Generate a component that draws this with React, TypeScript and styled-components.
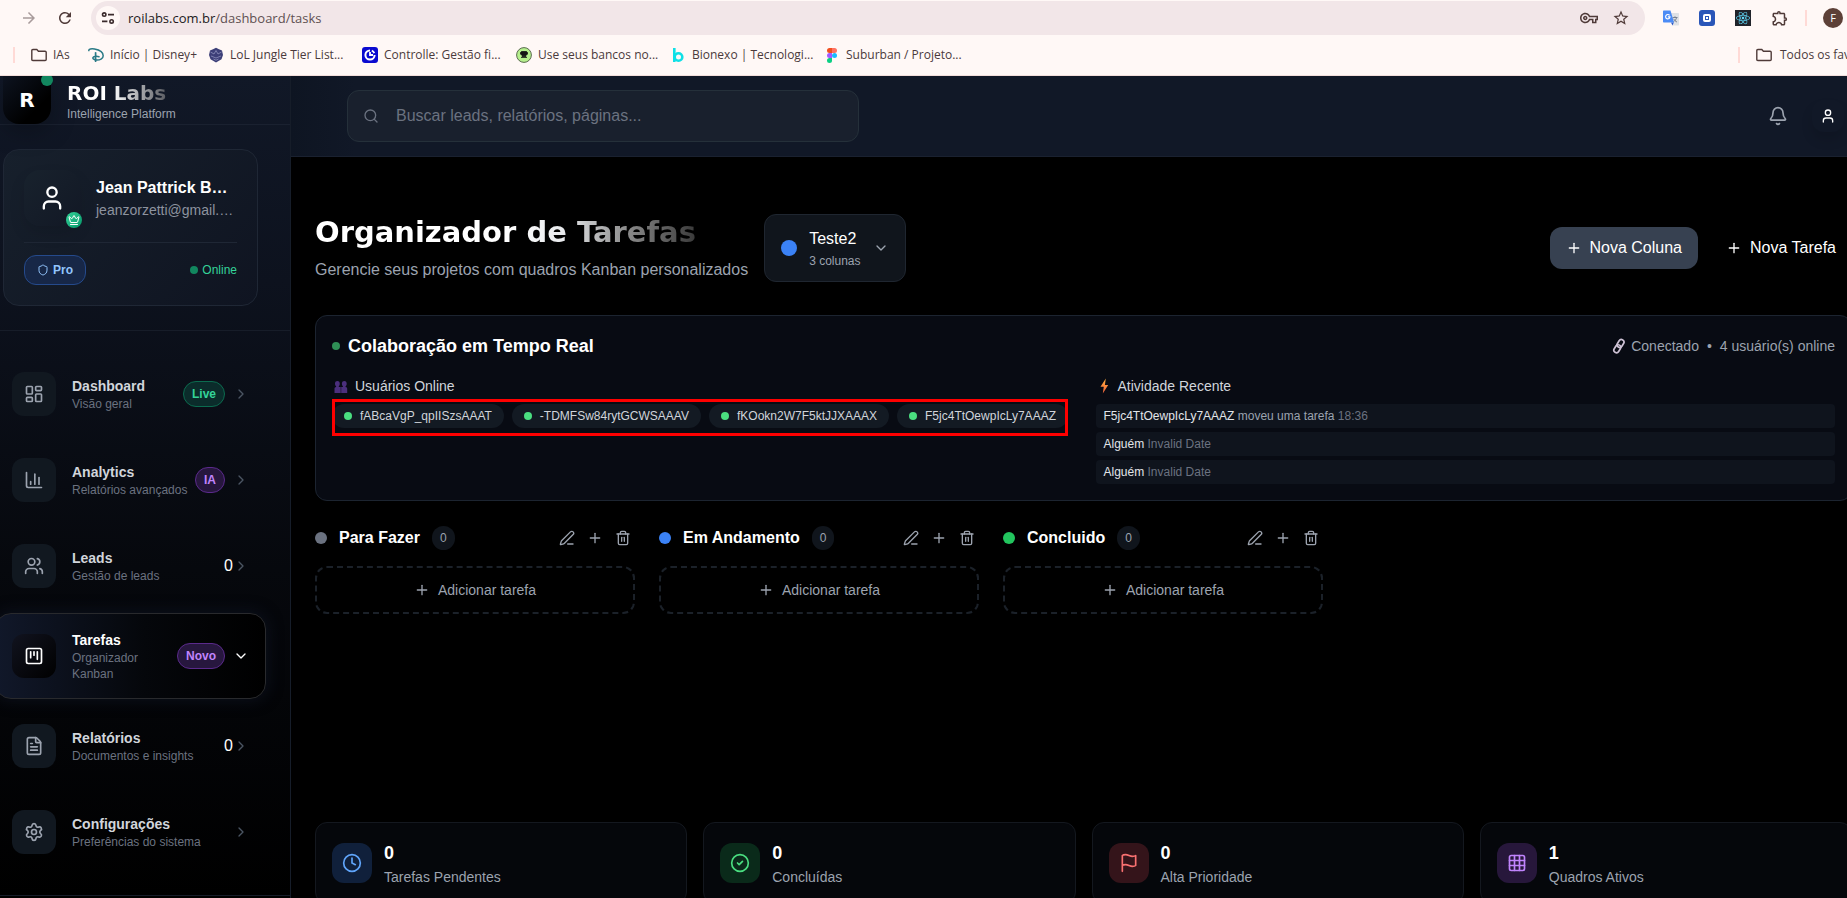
import React from "react";
import styled, { createGlobalStyle, css } from "styled-components";
import {
  Bell, ChartColumn, ChevronDown, ChevronRight, CircleCheck, Clock, Crown, FileText, Grid3x3,
  LayoutDashboard, PenLine, Plus, Search, Settings, Shield, SquareKanban, Trash2, User, Users,
} from "lucide-react";
import {
  MdArrowForward, MdOutlineExtension, MdOutlineVpnKey, MdRefresh, MdStarBorder,
} from "react-icons/md";
import { FaReact } from "react-icons/fa6";

const Global = createGlobalStyle`
  * { box-sizing: border-box; }
  body { margin: 0; background: #000; color: #fff; font: 16px/24px "Liberation Sans", Arial, sans-serif; }
  button { font: inherit; color: inherit; border: 0; padding: 0; background: none; cursor: pointer; }
  a { color: inherit; text-decoration: none; }
  h1, h2, h3, p, ul { margin: 0; padding: 0; }
  ul { list-style: none; }
  svg { flex: none; display: block; }
`;

const Window = styled.div`
  height: 100vh;
  display: flex;
  flex-direction: column;
  overflow: hidden;
`;

/* Browser bars */
const Chrome = styled.header`
  flex: none;
  background: #fff8f6;
  border-bottom: 1px solid #f3dedb;
  color: #4a3a3c;
  font: 12px/16px "Open Sans", "Noto Sans", sans-serif;
  overflow: hidden;
`;
const Toolbar = styled.div`
  display: flex;
  align-items: center;
  padding: 1px 4px 0 20px;
`;
const ToolButton = styled.button<{ $faint?: boolean; $gap?: number }>`
  display: flex;
  flex: none;
  margin-right: ${(p) => p.$gap ?? 0}px;
  color: ${(p) => (p.$faint ? "#a89b9b" : "#4f3a38")};
`;
const Omnibox = styled.div`
  flex: 1;
  display: flex;
  align-items: center;
  height: 34px;
  padding: 0 15px 0 5px;
  border-radius: 17px;
  background: #f2e6e8;
`;
const SiteInfo = styled.button`
  display: grid;
  place-items: center;
  width: 24px;
  height: 24px;
  border-radius: 12px;
  background: #fff8f6;
`;
const Url = styled.span`
  flex: 1;
  padding-left: 8px;
  font-size: 13px;
  color: #5f5052;
  b { font-weight: 400; color: #221a1b; }
`;
const Extensions = styled.div<{ $gap: number }>`
  display: flex;
  align-items: center;
  gap: ${(p) => p.$gap}px;
  padding-left: ${(p) => (p.$gap === 20 ? 18 : 16)}px;
`;
const Divider = styled.span`
  flex: none;
  width: 2px;
  height: 16px;
  background: #ffdad6;
`;
const ProfileDot = styled.button`
  width: 20px;
  height: 20px;
  border-radius: 10px;
  background: #5d4037;
  color: #fff;
  font-size: 11px;
  line-height: 20px;
`;
const Bookmarks = styled.nav`
  display: flex;
  align-items: center;
  height: 40px;
  padding-left: 13px;
`;
const Bookmark = styled.a<{ $width: number }>`
  display: flex;
  align-items: center;
  gap: 6px;
  flex: none;
  width: ${(p) => p.$width}px;
  white-space: nowrap;
`;
const BookmarkList = styled.div`
  flex: 1;
  display: flex;
  padding-left: 16px;
`;
const AllBookmarks = styled.a`
  display: flex;
  align-items: center;
  gap: 8px;
  flex: none;
  width: 91px;
  margin-left: 16px;
  overflow: hidden;
  white-space: nowrap;
`;

/* Application shell */
const Shell = styled.div`
  flex: 1;
  min-height: 0;
  display: flex;
  overflow: hidden;
`;
const Sidebar = styled.aside`
  flex: none;
  width: 291px;
  overflow: hidden;
  border-right: 1px solid #161d29;
  background: linear-gradient(180deg, #111827 0%, #0d121e 25%, #06080d 60%, #000 100%);
`;
const Brand = styled.div`
  display: flex;
  gap: 16px;
  height: 49px;
  padding-left: 3px;
  border-bottom: 1px solid #1a2130;
`;
const Logo = styled.div`
  position: relative;
  width: 48px;
  height: 48px;
  border-radius: 0 0 16px 16px;
  background: linear-gradient(135deg, #0d1320, #000 70%);
  font: 900 20px/48px "DejaVu Sans", "Liberation Sans", sans-serif;
  text-align: center;
  box-shadow: 0 8px 24px rgba(0, 0, 0, 0.25);
`;
const LogoDot = styled.span`
  position: absolute;
  top: -2px;
  right: -2px;
  width: 12px;
  height: 12px;
  border-radius: 6px;
  background: #12875f;
`;
const blackFace = css`
  font-family: "DejaVu Sans", "Liberation Sans", sans-serif;
  font-weight: 900;
  color: transparent;
  background-clip: text;
  -webkit-background-clip: text;
`;
const BrandName = styled.div`
  ${blackFace}
  width: max-content;
  padding-top: 4px;
  font-size: 20px;
  line-height: 26px;
  background-image: linear-gradient(90deg, #fff 45%, #4b4d54 105%);
`;
const BrandNote = styled.div`
  font-size: 12px;
  line-height: 16px;
  color: #9ca3af;
`;
const UserCard = styled.section`
  margin: 24px 32px 24px 3px;
  padding: 20px;
  border: 1px solid #1f2735;
  border-radius: 16px;
  background: linear-gradient(135deg, #17202c, #0f1421);
`;
const UserTop = styled.div`
  display: flex;
  align-items: center;
  gap: 16px;
  padding-bottom: 16px;
  border-bottom: 1px solid #1f2735;
`;
const Avatar = styled.div`
  position: relative;
  display: grid;
  place-items: center;
  width: 56px;
  height: 56px;
  border-radius: 16px;
  background: linear-gradient(135deg, #18222d, #121825);
  box-shadow: 0 8px 16px rgba(0, 0, 0, 0.1);
`;
const CrownBadge = styled.span`
  position: absolute;
  right: -2px;
  bottom: -2px;
  display: grid;
  place-items: center;
  width: 16px;
  height: 16px;
  border-radius: 8px;
  background: linear-gradient(135deg, #34d399, #059669);
`;
const UserName = styled.div`
  font-weight: 700;
  white-space: nowrap;
`;
const UserMail = styled.div`
  font-size: 14px;
  line-height: 20px;
  color: #8d939f;
`;
const UserBottom = styled.div`
  display: flex;
  align-items: center;
  justify-content: space-between;
  padding-top: 12px;
`;
const Plan = styled.span`
  display: flex;
  align-items: center;
  gap: 4px;
  height: 30px;
  padding: 0 12px;
  border: 1px solid #254a8c;
  border-radius: 12px;
  background: #172747;
  color: #93c5fd;
  font-size: 12px;
  font-weight: 700;
`;
const Online = styled.span`
  display: flex;
  align-items: center;
  gap: 4px;
  font-size: 12px;
  color: #34d399;
`;
const Dot = styled.span<{ $size: number; $color: string }>`
  flex: none;
  width: ${(p) => p.$size}px;
  height: ${(p) => p.$size}px;
  border-radius: 50%;
  background: ${(p) => p.$color};
`;
const Nav = styled.nav`
  display: flex;
  flex-direction: column;
  gap: 8px;
  padding: 24px 24px 24px 0;
  border: solid #171d29;
  border-width: 1px 0;
`;
const NavItem = styled.a<{ $active?: boolean }>`
  display: flex;
  align-items: center;
  margin-left: -5px;
  padding: 16px;
  border: 1px solid transparent;
  border-radius: 16px;
  ${(p) =>
    p.$active &&
    css`
      border-color: #292a2d;
      background: linear-gradient(90deg, #11182a, #05070b 55%, #000);
      box-shadow: 0 0 16px rgba(17, 24, 42, 0.7);
    `}
`;
const NavIcon = styled.span<{ $active?: boolean }>`
  flex: none;
  display: grid;
  place-items: center;
  width: 44px;
  height: 44px;
  margin-right: 16px;
  border-radius: 12px;
  color: ${(p) => (p.$active ? "#fff" : "#9ca3af")};
  background: ${(p) => (p.$active ? "linear-gradient(135deg, #11131f, #000)" : "#111820")};
`;
const NavText = styled.span`
  flex: 1;
  min-width: 0;
  padding-right: 4px;
`;
const NavTitle = styled.span<{ $active?: boolean }>`
  display: block;
  font-size: 14px;
  line-height: 20px;
  font-weight: 700;
  color: ${(p) => (p.$active ? "#fff" : "#d1d5db")};
`;
const NavNote = styled.span`
  display: block;
  font-size: 12px;
  line-height: 16px;
  color: #6b7280;
`;
const NavBadge = styled.span<{ $tone: "green" | "purple" }>`
  flex: none;
  margin-right: 8px;
  padding: 4px 8px;
  border: 1px solid ${(p) => (p.$tone === "green" ? "#0b6b4f" : "#5b2a8c")};
  border-radius: 13px;
  background: ${(p) => (p.$tone === "green" ? "#0b2c2b" : "#27173e")};
  color: ${(p) => (p.$tone === "green" ? "#34d399" : "#c084fc")};
  font-size: 12px;
  line-height: 16px;
  font-weight: 700;
`;

/* Main area */
const Main = styled.div`
  flex: 1;
  min-width: 0;
  overflow: hidden;
`;
const TopBar = styled.div`
  display: flex;
  align-items: center;
  height: 81px;
  padding: 0 3px 0 56px;
  border-bottom: 1px solid #1a2130;
  background: linear-gradient(90deg, #0e1522, #111827 64px);
`;
const SearchBox = styled.label`
  display: flex;
  align-items: center;
  gap: 17px;
  width: 512px;
  height: 52px;
  padding: 0 15px;
  border: 1px solid #25303a;
  border-radius: 12px;
  background: #19202d;
  color: #6b7280;
`;
const SearchInput = styled.input`
  flex: 1;
  border: 0;
  outline: 0;
  padding: 0;
  background: none;
  color: #fff;
  font: inherit;
  &::placeholder { color: #6b7280; opacity: 1; }
`;
const BellButton = styled.button`
  margin-left: auto;
  margin-right: 24px;
  color: #9ca3af;
`;
const AccountButton = styled.button`
  display: grid;
  place-items: center;
  width: 32px;
  height: 32px;
  border-radius: 12px;
  box-shadow: 0 8px 12px rgba(0, 0, 0, 0.12);
`;
const Content = styled.main`
  margin-right: -5px;
  padding: 57px 0 24px 24px;
`;
const PageHead = styled.div`
  display: flex;
  align-items: center;
  gap: 16px;
  margin-bottom: 33px;
`;
const PageTitle = styled.h1`
  ${blackFace}
  width: max-content;
  margin-bottom: 8px;
  font-size: 29px;
  line-height: 36px;
  background-image: linear-gradient(90deg, #fff 50%, #e8eaed 65%, #8a8a8a 82%, #3a3a3a 100%);
`;
const PageNote = styled.p`
  color: #9ca3af;
`;
const BoardPicker = styled.button`
  display: flex;
  align-items: center;
  gap: 12px;
  padding: 12px 16px;
  border: 1px solid #1f2630;
  border-radius: 12px;
  background: #10151c;
  text-align: left;
`;
const PickerText = styled.span`
  display: flex;
  flex-direction: column;
  gap: 2px;
  small { font-size: 12px; line-height: 16px; color: #9ca3af; }
`;
const Actions = styled.div`
  display: flex;
  gap: 12px;
  margin-left: auto;
`;
const ActionButton = styled.button<{ $filled?: boolean }>`
  display: flex;
  align-items: center;
  gap: 8px;
  height: 42px;
  padding: 0 16px;
  border-radius: 12px;
  background: ${(p) => (p.$filled ? "#374151" : "none")};
`;
const Panel = styled.section`
  padding: 16px;
  border: 1px solid #1c2430;
  border-radius: 12px;
  background: #080b13;
`;
const PanelHead = styled.div`
  display: flex;
  align-items: center;
  gap: 8px;
  margin-bottom: 16px;
`;
const PanelTitle = styled.h2`
  font-size: 18px;
  line-height: 28px;
  font-weight: 700;
`;
const Connection = styled.div`
  display: flex;
  align-items: center;
  gap: 8px;
  margin-left: auto;
  font-size: 14px;
  line-height: 20px;
  color: #9ca3af;
`;
const LinkState = styled.span`
  display: flex;
  align-items: center;
  gap: 5px;
`;
const PanelGrid = styled.div`
  display: grid;
  grid-template-columns: 1fr 1fr;
  gap: 24px;
`;
const GroupTitle = styled.h3`
  display: flex;
  align-items: center;
  gap: 5px;
  margin-bottom: 8px;
  font-size: 14px;
  line-height: 20px;
  font-weight: 400;
  color: #d1d5db;
`;
const ChipList = styled.ul`
  position: relative;
  display: flex;
  gap: 8px;
  width: max-content;
`;
const Marker = styled.span`
  position: absolute;
  inset: -5px 0 -8px 0;
  border: 3px solid #f00;
`;
const Chip = styled.li`
  display: flex;
  align-items: center;
  gap: 8px;
  height: 24px;
  padding: 0 12px;
  border-radius: 12px;
  background: #131a23;
  color: #d1d5db;
  font-size: 12px;
`;
const FeedList = styled.ul`
  display: flex;
  flex-direction: column;
  gap: 4px;
`;
const FeedRow = styled.li`
  padding: 4px 8px;
  border-radius: 4px;
  background: #0f141d;
  color: #9ca3af;
  font-size: 12px;
  line-height: 16px;
  b { font-weight: 400; color: #e2e5ea; }
  time { color: #6b7280; }
`;
const Board = styled.section`
  display: flex;
  gap: 24px;
  min-height: 272px;
  margin: 25px 0 24px;
`;
const Column = styled.div`
  width: 320px;
`;
const ColumnHead = styled.div`
  display: flex;
  align-items: center;
  gap: 12px;
  margin-bottom: 16px;
  h3 { font-size: 16px; line-height: 24px; font-weight: 700; }
`;
const Count = styled.span`
  padding: 4px 8px;
  border-radius: 12px;
  background: #10151c;
  color: #9ca3af;
  font-size: 12px;
  line-height: 16px;
`;
const ColumnTools = styled.div`
  display: flex;
  gap: 4px;
  margin-left: auto;
  color: #9ca3af;
  button { padding: 4px; }
`;
const AddTask = styled.button`
  display: flex;
  align-items: center;
  justify-content: center;
  gap: 8px;
  width: 100%;
  height: 48px;
  border: 2px dashed #1b2129;
  border-radius: 12px;
  color: #9ca3af;
  font-size: 14px;
`;
const Stats = styled.section`
  display: grid;
  grid-template-columns: repeat(4, 1fr);
  gap: 16px;
`;
const StatCard = styled.div`
  display: flex;
  align-items: center;
  gap: 12px;
  padding: 16px;
  border: 1px solid #14181f;
  border-radius: 12px;
  background: #05070b;
`;
const StatIcon = styled.span<{ $bg: string; $fg: string }>`
  display: grid;
  place-items: center;
  width: 40px;
  height: 40px;
  border-radius: 12px;
  background: ${(p) => p.$bg};
  color: ${(p) => p.$fg};
`;
const StatValue = styled.div`
  font-size: 18px;
  line-height: 28px;
  font-weight: 700;
`;
const StatLabel = styled.div`
  font-size: 14px;
  line-height: 20px;
  color: #9ca3af;
`;

/* Drawings */
const FolderIcon = () => (
  <svg width="16" height="16" viewBox="0 0 16 16" fill="none" stroke="#4f3a38" strokeWidth="1.4">
    <path d="M.8 3.600c0-.7.4-1.100 1.100-1.100h3.900l1.600 1.700h6.700c.7 0 1.100.4 1.100 1.100v7.100c0 .7-.4 1.100-1.100 1.100H1.900c-.7 0-1.100-.4-1.100-1.100z" />
  </svg>
);
const TuneIcon = () => (
  <svg width="14" height="14" viewBox="0 0 14 14" fill="none" stroke="#3b2b2c" strokeWidth="1.6">
    <circle cx="3.2" cy="3.6" r="1.7" /><path d="M7 3.6h6M1 10.4h5.4" /><circle cx="10.6" cy="10.4" r="1.7" />
  </svg>
);
const DisneyIcon = () => (
  <svg width="16" height="16" viewBox="0 0 16 16" fill="none" stroke="#2a7a86" strokeLinecap="round">
    <path d="M.8 3.600C.600 1.900 3.500 1.500 6.500 2c4.800.8 8.700 3.300 8.700 6.800 0 3-3.400 4.500-6.700 4.300-2.500-.2-3.900-1.300-3.600-2.400.4-1.300 3.500-1.700 6.100-1" strokeWidth="1.500" />
    <path d="M7.600 5.800v8.400" strokeWidth="1.700" />
  </svg>
);
const LolIcon = () => (
  <svg width="16" height="16" viewBox="0 0 16 16">
    <path d="M8 .8l3 1.400 3 1.300 1 4.500-1.500 4.300L8 15.500l-5.500-3.200L1 8l1-4.500 3-1.300z" fill="#3d3f78" />
    <path d="M2.500 5l3.500 2 2-3.500L10 7l3.500-2M3 9l5 2 5-2M5.500 12l2.500 1.200 2.500-1.200" stroke="#8d8fbb" strokeWidth=".8" fill="none" />
  </svg>
);
const ControlleIcon = () => (
  <svg width="16" height="16" viewBox="0 0 16 16">
    <rect width="16" height="16" rx="3" fill="#0a0ad0" />
    <path d="M8 3.400A4.600 4.600 0 1 0 12.600 8" fill="none" stroke="#fff" strokeWidth="2" />
    <path d="M8 8.900V5M7.100 8H11" stroke="#fff" strokeWidth="1.800" />
    <path d="M9.800 3.700a4.600 4.600 0 0 1 2.500 2.500" fill="none" stroke="#fff" strokeWidth="1.800" />
  </svg>
);
const BankIcon = () => (
  <svg width="16" height="16" viewBox="0 0 16 16">
    <circle cx="8" cy="8" r="7.400" fill="#b6f08d" stroke="#5b6b50" />
    <path d="M5.500 4.500h5l1 1v1.500l-1 1h-5l-1-1V5.500zM6 8.500h4v1H6zM5 10.500h6" fill="#151515" stroke="#151515" strokeWidth=".8" />
  </svg>
);
const BionexoIcon = () => (
  <svg width="16" height="16" viewBox="0 0 16 16" fill="none" stroke="#0fe0e6" strokeWidth="2.600">
    <path d="M4.300 1v14" /><circle cx="8.500" cy="10" r="3.800" />
  </svg>
);
const FigmaIcon = () => (
  <svg width="16" height="16" viewBox="0 0 16 16">
    <path d="M8 1H5.500a2.500 2.500 0 0 0 0 5H8z" fill="#f24e1e" />
    <path d="M8 1h2.500a2.500 2.500 0 0 1 0 5H8z" fill="#ff7262" />
    <path d="M8 6H5.500a2.500 2.500 0 0 0 0 5H8z" fill="#a259ff" />
    <circle cx="10.500" cy="8.500" r="2.500" fill="#1abcfe" />
    <path d="M8 11H5.500A2.500 2.500 0 1 0 8 13.500z" fill="#0acf83" />
  </svg>
);
const CaptureIcon = () => (
  <svg width="16" height="16" viewBox="0 0 16 16">
    <rect width="16" height="16" rx="3" fill="#2a56b8" />
    <rect x="5" y="5" width="6" height="6" rx="1" fill="none" stroke="#fff" strokeWidth="2" />
    <rect x="7" y="7" width="2" height="2" fill="#fff" />
  </svg>
);
const TranslateIcon = () => (
  <svg width="16" height="16" viewBox="0 0 16 16" fill="none">
    <path d="M6.500 3H15c.6 0 1 .4 1 1v10.500c0 .6-.4 1-1 1H9.500z" fill="#dfe1e5" />
    <path d="M9.500 7.500h5M12 6.300v1.200M13.600 7.600c-.5 2-1.700 3.400-3.300 4.300M10.600 8.800c.7 1.500 1.900 2.600 3.400 3.300" stroke="#6f7b8a" strokeWidth=".9" />
    <path d="M8 12.500h2.800L9.500 15.500z" fill="#2a56c6" />
    <path d="M1 .5h6.500l3.500 12H1c-.6 0-1-.4-1-1v-10c0-.6.4-1 1-1z" fill="#4c8bf5" />
    <path d="M6.600 5.400A2.200 2.200 0 1 0 7 6.900H4.900" stroke="#fff" strokeWidth="1.100" />
  </svg>
);
const ReactTile = styled.span`
  display: grid;
  place-items: center;
  width: 16px;
  height: 16px;
  background: #20232a;
  color: #61dafb;
`;
const PeopleIcon = () => (
  <svg width="18" height="16" viewBox="0 0 18 16" fill="#4b2f7d">
    <path d="M3 5.500C3 3.800 4.100 3 5.400 3s2.400.8 2.400 2.500c0 1.300-.4 2.200-1 2.700v.9h1.900V15H2.500v-4.200c0-1 .6-1.500 1.600-1.700v-.9C3.400 7.700 3 6.800 3 5.500z" />
    <path d="M9.900 5.500c0-1.700 1.100-2.500 2.400-2.500s2.400.8 2.400 2.500c0 1.300-.4 2.200-1.100 2.700v.9c1.100.2 1.600.7 1.600 1.700V15H9.200V9.100h1.700v-.9c-.6-.5-1-1.400-1-2.700z" />
  </svg>
);
const BoltIcon = () => (
  <svg width="17" height="16" viewBox="0 0 17 16">
    <defs>
      <linearGradient id="bolt" x1="0" y1="0" x2="0" y2="1">
        <stop offset="0" stopColor="#ffb13d" /><stop offset="1" stopColor="#f4613c" />
      </linearGradient>
    </defs>
    <path d="M9.800.5L4.500 8.700h3.300L6.800 15.500l5.400-8.600H8.900z" fill="url(#bolt)" />
  </svg>
);
const LinkIcon = () => (
  <svg width="14" height="16" viewBox="0 0 14 16" fill="none" stroke="#cfc3d6" strokeWidth="1.700">
    <rect x="5.900" y="1.300" width="5.200" height="8.400" rx="2.600" transform="rotate(32 8.500 5.500)" />
    <rect x="2.700" y="6.500" width="5.200" height="8.400" rx="2.600" transform="rotate(32 5.300 10.700)" />
  </svg>
);
const FlagIcon = () => (
  <svg width="20" height="20" viewBox="0 0 24 24" fill="none" stroke="currentColor" strokeWidth="2" strokeLinecap="round" strokeLinejoin="round">
    <path d="M4 15s1-1 4-1 5 2 8 2 4-1 4-1V3s-1 1-4 1-5-2-8-2-4 1-4 1zM4 22v-7" />
  </svg>
);

const bookmarks = [
  { icon: <FolderIcon />, label: "IAs", width: 57 },
  { icon: <DisneyIcon />, label: "Início | Disney+", width: 120 },
  { icon: <LolIcon />, label: "LoL Jungle Tier List...", width: 154 },
  { icon: <ControlleIcon />, label: "Controlle: Gestão fi...", width: 154 },
  { icon: <BankIcon />, label: "Use seus bancos no...", width: 154 },
  { icon: <BionexoIcon />, label: "Bionexo | Tecnologi...", width: 154 },
  { icon: <FigmaIcon />, label: "Suburban / Projeto...", width: 154 },
];

type NavEntry = {
  icon: React.ElementType;
  title: string;
  note: string;
  badge?: string;
  tone?: "green" | "purple";
  count?: number;
  active?: boolean;
};
const navItems: NavEntry[] = [
  { icon: LayoutDashboard, title: "Dashboard", note: "Visão geral", badge: "Live", tone: "green" },
  { icon: ChartColumn, title: "Analytics", note: "Relatórios avançados", badge: "IA", tone: "purple" },
  { icon: Users, title: "Leads", note: "Gestão de leads", count: 0 },
  { icon: SquareKanban, title: "Tarefas", note: "Organizador Kanban", badge: "Novo", tone: "purple", active: true },
  { icon: FileText, title: "Relatórios", note: "Documentos e insights", count: 0 },
  { icon: Settings, title: "Configurações", note: "Preferências do sistema" },
];

const users = ["fABcaVgP_qpIISzsAAAT", "-TDMFSw84rytGCWSAAAV", "fKOokn2W7F5ktJJXAAAX", "F5jc4TtOewpIcLy7AAAZ"];
const feed = [
  { who: "F5jc4TtOewpIcLy7AAAZ", what: " moveu uma tarefa", when: "18:36" },
  { who: "Alguém", what: "", when: "Invalid Date" },
  { who: "Alguém", what: "", when: "Invalid Date" },
];
const columns = [
  { name: "Para Fazer", color: "#6b7280" },
  { name: "Em Andamento", color: "#3b82f6" },
  { name: "Concluido", color: "#22c55e" },
];
const stats = [
  { icon: <Clock size={20} />, value: 0, label: "Tarefas Pendentes", bg: "#10203b", fg: "#60a5fa" },
  { icon: <CircleCheck size={20} />, value: 0, label: "Concluídas", bg: "#0a2a1a", fg: "#4ade80" },
  { icon: <FlagIcon />, value: 0, label: "Alta Prioridade", bg: "#34141a", fg: "#f87171" },
  { icon: <Grid3x3 size={20} />, value: 1, label: "Quadros Ativos", bg: "#27173b", fg: "#c084fc" },
];

function BrowserBars() {
  return (
    <Chrome>
      <Toolbar>
        <ToolButton $faint $gap={18} aria-label="Avançar"><MdArrowForward size={18} /></ToolButton>
        <ToolButton $gap={17} aria-label="Recarregar"><MdRefresh size={18} /></ToolButton>
        <Omnibox>
          <SiteInfo aria-label="Informações do site"><TuneIcon /></SiteInfo>
          <Url><b>roilabs.com.br</b>/dashboard/tasks</Url>
          <ToolButton $gap={14} aria-label="Senhas"><MdOutlineVpnKey size={18} /></ToolButton>
          <ToolButton aria-label="Favoritar"><MdStarBorder size={18} /></ToolButton>
        </Omnibox>
        <Extensions $gap={20}>
          <TranslateIcon />
          <CaptureIcon />
          <ReactTile><FaReact size={14} /></ReactTile>
          <ToolButton aria-label="Extensões"><MdOutlineExtension size={18} /></ToolButton>
        </Extensions>
        <Extensions $gap={16}>
          <Divider />
          <ProfileDot>F</ProfileDot>
        </Extensions>
      </Toolbar>
      <Bookmarks>
        <Divider />
        <BookmarkList>
          {bookmarks.map((b) => (
            <Bookmark key={b.label} href="#" $width={b.width}>{b.icon}{b.label}</Bookmark>
          ))}
        </BookmarkList>
        <Divider />
        <AllBookmarks href="#"><FolderIcon />Todos os favoritos</AllBookmarks>
      </Bookmarks>
    </Chrome>
  );
}

function SideMenu() {
  return (
    <Sidebar>
      <Brand>
        <Logo>R<LogoDot /></Logo>
        <div>
          <BrandName>ROI Labs</BrandName>
          <BrandNote>Intelligence Platform</BrandNote>
        </div>
      </Brand>
      <UserCard>
        <UserTop>
          <Avatar>
            <User size={28} />
            <CrownBadge><Crown size={12} /></CrownBadge>
          </Avatar>
          <div>
            <UserName>Jean Pattrick B…</UserName>
            <UserMail>jeanzorzetti@gmail.…</UserMail>
          </div>
        </UserTop>
        <UserBottom>
          <Plan><Shield size={12} />Pro</Plan>
          <Online><Dot $size={8} $color="#12875f" />Online</Online>
        </UserBottom>
      </UserCard>
      <Nav>
        {navItems.map(({ icon: Icon, ...item }) => (
          <NavItem key={item.title} href="#" $active={item.active}>
            <NavIcon $active={item.active}><Icon size={20} /></NavIcon>
            <NavText>
              <NavTitle $active={item.active}>{item.title}</NavTitle>
              <NavNote>{item.note}</NavNote>
            </NavText>
            {item.badge && <NavBadge $tone={item.tone!}>{item.badge}</NavBadge>}
            {item.count}
            {item.active ? <ChevronDown size={16} /> : <ChevronRight size={16} color="#4b5563" />}
          </NavItem>
        ))}
      </Nav>
    </Sidebar>
  );
}

export default function App() {
  return (
    <Window>
      <Global />
      <BrowserBars />
      <Shell>
        <SideMenu />
        <Main>
          <TopBar>
            <SearchBox>
              <Search size={16} />
              <SearchInput aria-label="Buscar" placeholder="Buscar leads, relatórios, páginas..." />
            </SearchBox>
            <BellButton aria-label="Notificações"><Bell size={20} /></BellButton>
            <AccountButton aria-label="Conta"><User size={16} /></AccountButton>
          </TopBar>
          <Content>
            <PageHead>
              <div>
                <PageTitle>Organizador de Tarefas</PageTitle>
                <PageNote>Gerencie seus projetos com quadros Kanban personalizados</PageNote>
              </div>
              <BoardPicker>
                <Dot $size={16} $color="#3b82f6" />
                <PickerText>Teste2<small>3 colunas</small></PickerText>
                <ChevronDown size={16} color="#9ca3af" />
              </BoardPicker>
              <Actions>
                <ActionButton $filled><Plus size={16} />Nova Coluna</ActionButton>
                <ActionButton><Plus size={16} />Nova Tarefa</ActionButton>
              </Actions>
            </PageHead>
            <Panel>
              <PanelHead>
                <Dot $size={8} $color="#2f8f56" />
                <PanelTitle>Colaboração em Tempo Real</PanelTitle>
                <Connection>
                  <LinkState><LinkIcon />Conectado</LinkState>
                  <span>•</span>
                  <span>4 usuário(s) online</span>
                </Connection>
              </PanelHead>
              <PanelGrid>
                <div>
                  <GroupTitle><PeopleIcon />Usuários Online</GroupTitle>
                  <ChipList>
                    {users.map((u) => (
                      <Chip key={u}><Dot $size={8} $color="#4ade80" />{u}</Chip>
                    ))}
                    <Marker />
                  </ChipList>
                </div>
                <div>
                  <GroupTitle><BoltIcon />Atividade Recente</GroupTitle>
                  <FeedList>
                    {feed.map((f, i) => (
                      <FeedRow key={i}><b>{f.who}</b>{f.what} <time>{f.when}</time></FeedRow>
                    ))}
                  </FeedList>
                </div>
              </PanelGrid>
            </Panel>
            <Board>
              {columns.map((c) => (
                <Column key={c.name}>
                  <ColumnHead>
                    <Dot $size={12} $color={c.color} />
                    <h3>{c.name}</h3>
                    <Count>0</Count>
                    <ColumnTools>
                      <button aria-label="Editar coluna"><PenLine size={16} /></button>
                      <button aria-label="Adicionar"><Plus size={16} /></button>
                      <button aria-label="Excluir coluna"><Trash2 size={16} /></button>
                    </ColumnTools>
                  </ColumnHead>
                  <AddTask><Plus size={16} />Adicionar tarefa</AddTask>
                </Column>
              ))}
            </Board>
            <Stats>
              {stats.map((s) => (
                <StatCard key={s.label}>
                  <StatIcon $bg={s.bg} $fg={s.fg}>{s.icon}</StatIcon>
                  <div>
                    <StatValue>{s.value}</StatValue>
                    <StatLabel>{s.label}</StatLabel>
                  </div>
                </StatCard>
              ))}
            </Stats>
          </Content>
        </Main>
      </Shell>
    </Window>
  );
}
